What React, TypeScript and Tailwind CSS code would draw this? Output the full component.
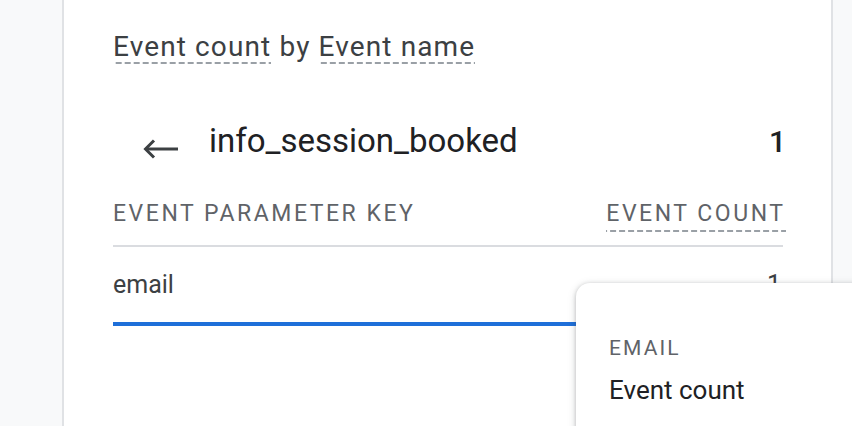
const dashed =
  "bg-[linear-gradient(to_right,#9aa0a6_6px,transparent_6px)] bg-[length:9px_2px] bg-bottom bg-repeat-x";

function BackArrow() {
  return (
    <svg width="36" height="20" viewBox="0 0 36 20" fill="none" stroke="#3c4043" strokeWidth={3}>
      <path d="M35 10H3" />
      <path d="M11 1.5L2.5 10l8.5 8.5" />
    </svg>
  );
}

export default function App() {
  return (
    <div className="relative flex h-[426px] w-[852px] overflow-hidden bg-[#f8f9fa] font-['Roboto',sans-serif]">
      <div className="w-[62px] shrink-0" />
      <div className="flex-1 border-x-[2px] border-[#e0e2e5] bg-white pl-[49px] pr-[48px] pt-[29px]">
        <h2 className="text-[28px] leading-[36px] tracking-[0.04em] text-[#3c4043]">
          <span className={`${dashed} pb-[1px]`}>Event count</span> by{" "}
          <span className={`${dashed} pb-[1px]`}>Event name</span>
        </h2>

        <div className="mt-[56px] flex h-[40px] items-baseline">
          <div className="ml-[30px] flex w-[66px] self-center pt-[16px]">
            <BackArrow />
          </div>
          <div className="flex-1 text-[33px] leading-[40px] text-[#202124]">info_session_booked</div>
          <div className="-mr-[3px] text-[30px] font-medium leading-[40px] text-[#202124]">1</div>
        </div>

        <div className="mt-[38px] flex border-b-[2px] border-[#dadce0] pb-[16px] text-[23px] uppercase leading-[30px] tracking-[0.11em] text-[#5f6368]">
          <div className="flex-1">Event parameter key</div>
          <div className="-mr-[0.11em]">
            <span className={`${dashed} pb-[5px]`}>Event count</span>
          </div>
        </div>

        <div className="flex pt-[22px] text-[25px] leading-[32px] text-[#3c4043]">
          <div className="flex-1">email</div>
          <div className="pr-[2px]">1</div>
        </div>
        <div className="mt-[21px] h-[4px] w-full bg-[#1e6fd9]" />
      </div>
      <div className="w-[19px] shrink-0" />

      <div className="absolute left-[576px] top-[283px] h-[200px] w-[320px] rounded-tl-[14px] bg-white pl-[33px] pt-[51px] shadow-[0_1px_4px_rgba(60,64,67,0.3),0_2px_10px_rgba(60,64,67,0.15)]">
        <div className="text-[21px] uppercase leading-[28px] tracking-[0.1em] text-[#5f6368]">Email</div>
        <div className="mt-[12px] text-[26px] leading-[32px] text-[#202124]">Event count</div>
      </div>
    </div>
  );
}
